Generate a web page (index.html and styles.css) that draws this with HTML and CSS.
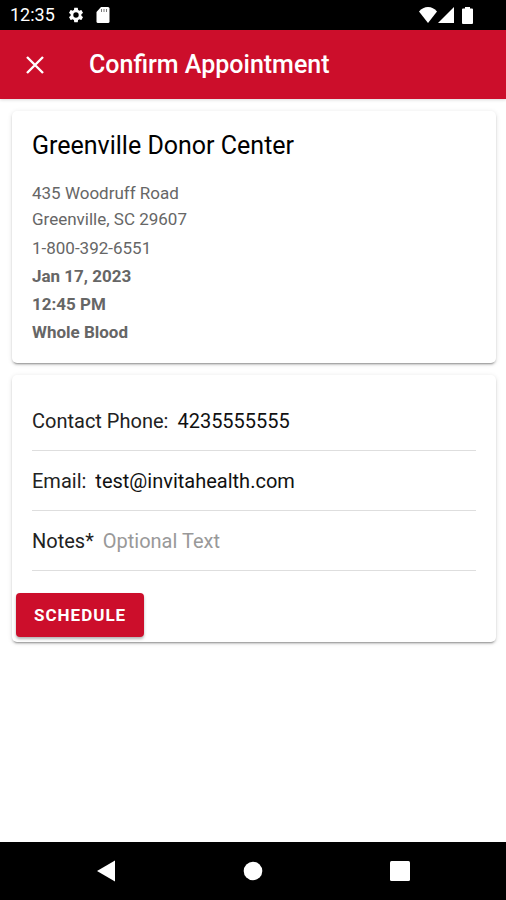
FILE: index.html
```html
<!DOCTYPE html>
<html lang="en">
<head>
<meta charset="utf-8">
<meta name="viewport" content="width=device-width, initial-scale=1">
<title>Confirm Appointment</title>
<link rel="stylesheet" href="styles.css">
</head>
<body>

<div class="status-bar">
  <span class="time">12:35</span>
  <svg class="status-gear" width="18" height="18" viewBox="0 0 24 24"><path fill="#fff" d="M19.14 12.94c.04-.3.06-.61.06-.94 0-.32-.02-.64-.07-.94l2.03-1.58a.49.49 0 0 0 .12-.61l-1.92-3.32a.49.49 0 0 0-.59-.22l-2.39.96c-.5-.38-1.03-.7-1.62-.94l-.36-2.54a.48.48 0 0 0-.48-.41h-3.84c-.24 0-.43.17-.47.41l-.36 2.54c-.59.24-1.13.57-1.62.94l-2.39-.96c-.22-.08-.47 0-.59.22L2.74 8.87c-.12.21-.08.47.12.61l2.03 1.58c-.05.3-.09.63-.09.94s.02.64.07.94l-2.03 1.58a.49.49 0 0 0-.12.61l1.92 3.32c.12.22.37.29.59.22l2.39-.96c.5.38 1.03.7 1.62.94l.36 2.54c.05.24.24.41.48.41h3.84c.24 0 .44-.17.47-.41l.36-2.54c.59-.24 1.13-.56 1.62-.94l2.39.96c.22.08.47 0 .59-.22l1.92-3.32c.12-.22.07-.47-.12-.61l-2.01-1.58zM12 15.6A3.6 3.6 0 1 1 12 8.400a3.6 3.6 0 0 1 0 7.200z"/></svg>
  <svg class="status-card" width="14" height="16" viewBox="0 0 14 16"><path fill="#fff" d="M5 0h7a1.500 1.500 0 0 1 1.500 1.500v13A1.500 1.500 0 0 1 12 16H2A1.500 1.500 0 0 1 .5 14.500V5z"/><path stroke="#777" stroke-width="1" d="M5.500 2v3M8 2v3M10.500 2v3"/></svg>
  <div class="status-right">
    <svg width="18" height="16" viewBox="0 0 18 16"><path fill="#fff" d="M9 16L0 4.500C2.500 1.500 5.500 0 9 0s6.500 1.500 9 4.500z"/></svg>
    <svg width="16" height="16" viewBox="0 0 16 16"><path fill="#fff" d="M16 0v16H0z"/></svg>
    <svg class="battery" width="11" height="17" viewBox="0 0 11 17"><path fill="#fff" d="M3 0h5v1.500h2a1 1 0 0 1 1 1V16a1 1 0 0 1-1 1H1a1 1 0 0 1-1-1V2.500a1 1 0 0 1 1-1h2z"/></svg>
  </div>
</div>

<header class="toolbar">
  <button type="button" class="close" aria-label="Close">
    <svg width="18" height="18" viewBox="0 0 18 18"><path stroke="#fff" stroke-width="2.400" d="M1 1l16 16M17 1L1 17"/></svg>
  </button>
  <h1>Confirm Appointment</h1>
</header>

<main class="content">
  <section class="card center-info">
    <h2>Greenville Donor Center</h2>
    <p class="address">435 Woodruff Road<br>Greenville, SC 29607</p>
    <p>1-800-392-6551</p>
    <p class="bold">Jan 17, 2023</p>
    <p class="bold">12:45 PM</p>
    <p class="bold">Whole Blood</p>
  </section>

  <form class="card" action="">
    <div class="fields">
      <div class="row">
        <label for="phone">Contact Phone:</label>
        <input type="tel" id="phone" name="phone" value="4235555555">
      </div>
      <div class="row">
        <label for="email">Email:</label>
        <input type="email" id="email" name="email" value="test@invitahealth.com">
      </div>
      <div class="row">
        <label for="notes">Notes*</label>
        <input type="text" id="notes" name="notes" placeholder="Optional Text">
      </div>
    </div>
    <button type="button" class="schedule">Schedule</button>
  </form>
</main>

<nav class="nav-bar">
  <button type="button" aria-label="Back">
    <svg width="22" height="22" viewBox="0 0 22 22"><path fill="#fff" d="M20 .5v21L2 11z"/></svg>
  </button>
  <button type="button" aria-label="Home">
    <svg width="20" height="20" viewBox="0 0 20 20"><circle cx="10" cy="10" r="9.300" fill="#fff"/></svg>
  </button>
  <button type="button" aria-label="Recent apps">
    <svg width="20" height="20" viewBox="0 0 20 20"><rect width="20" height="20" rx="1.500" fill="#fff"/></svg>
  </button>
</nav>

</body>
</html>
```

FILE: styles.css
```css
* {
  box-sizing: border-box;
}

body {
  display: flex;
  flex-direction: column;
  min-height: 100vh;
  margin: 0;
  background-color: #fff;
  font-family: Roboto, "Noto Sans", sans-serif;
}

h1, h2, p {
  margin: 0;
}

button {
  border: none;
  font-family: inherit;
  cursor: pointer;
}

svg {
  display: block;
}

/* Android status bar */
.status-bar {
  display: flex;
  align-items: center;
  height: 30px;
  padding: 0 33px 0 10px;
  background-color: #000;
  color: #fff;
}

.time {
  font-size: 18px;
  line-height: 30px;
}

.status-gear {
  margin-left: 12px;
}

.status-card {
  margin-left: 11px;
}

.status-right {
  display: flex;
  align-items: center;
  gap: 1px;
  margin-left: auto;
}

.battery {
  margin-left: 7px;
}

/* Header */
.toolbar {
  display: flex;
  align-items: center;
  height: 69px;
  padding: 0 16px;
  background-color: #cc0e2b;
  color: #fff;
  box-shadow: 0 1px 3px rgba(0, 0, 0, 0.15);
}

.close {
  padding: 10px;
  background: none;
}

.toolbar h1 {
  margin-left: 35px;
  font-size: 25px;
  font-weight: 500;
  line-height: 32px;
}

/* Cards */
.content {
  flex: 1;
  display: flex;
  flex-direction: column;
  gap: 12px;
  padding: 12px 10px 12px 12px;
}

.card {
  border-radius: 5px;
  background-color: #fff;
  box-shadow: 0 3px 1px -2px rgba(0, 0, 0, 0.2), 0 2px 2px 0 rgba(0, 0, 0, 0.14), 0 1px 5px 0 rgba(0, 0, 0, 0.12);
}

.center-info {
  padding: 20px 20px 17px;
  color: #666;
  font-size: 17px;
  line-height: 28px;
}

.center-info h2 {
  margin-bottom: 19px;
  color: #000;
  font-size: 25px;
  font-weight: 400;
  line-height: 30px;
}

.address {
  margin-bottom: 2px;
  line-height: 26px;
}

.bold {
  font-weight: 700;
}

.fields {
  padding: 16px 20px 0;
}

.row {
  display: flex;
  align-items: center;
  gap: 9px;
  height: 60px;
  border-bottom: 1px solid #dedede;
  color: #222;
  font-size: 20px;
}

.row input {
  flex: 1;
  min-width: 0;
  padding: 0;
  border: none;
  outline: none;
  background: none;
  color: #111;
  font: inherit;
}

.row input::placeholder {
  color: #999;
}

.schedule {
  display: block;
  height: 44px;
  margin: 22px 4px 5px;
  padding: 0 18px;
  border-radius: 4px;
  background-color: #cc0e2b;
  color: #fff;
  font-size: 17px;
  font-weight: 700;
  letter-spacing: 1px;
  text-transform: uppercase;
  box-shadow: 0 2px 3px rgba(0, 0, 0, 0.3);
}

/* Android navigation bar */
.nav-bar {
  display: grid;
  grid-template-columns: repeat(3, 1fr);
  height: 58px;
  padding: 0 33px;
  background-color: #000;
}

.nav-bar button {
  display: flex;
  align-items: center;
  justify-content: center;
  background: none;
}
```
